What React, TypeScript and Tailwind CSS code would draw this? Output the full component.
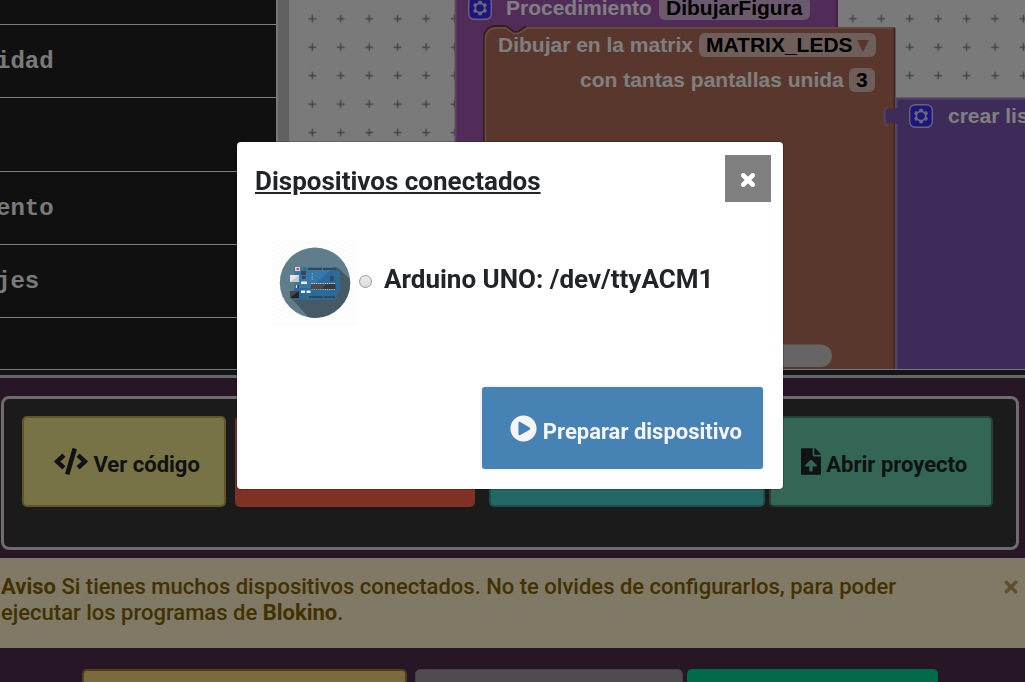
import React from "react";
import { FaCode, FaFileUpload, FaPlayCircle } from "react-icons/fa";

const GEAR =
  "m4.203,7.296 0,1.368 -0.92,0.677 -0.11,0.41 0.9,1.559 0.41,0.11 1.043,-0.457 1.187,0.683 0.127,1.134 0.3,0.3 1.8,0 0.3,-0.299 0.127,-1.138 1.185,-0.682 1.046,0.458 0.409,-0.11 0.9,-1.559 -0.11,-0.41 -0.92,-0.677 0,-1.366 0.92,-0.677 0.11,-0.41 -0.9,-1.559 -0.409,-0.109 -1.046,0.458 -1.185,-0.682 -0.127,-1.138 -0.3,-0.299 -1.8,0 -0.3,0.3 -0.126,1.135 -1.187,0.682 -1.043,-0.457 -0.41,0.11 -0.899,1.559 0.108,0.409z";

function MutatorIcon({ className }: { className: string }) {
  return (
    <svg viewBox="-0.5 -0.5 17 17" className={`absolute size-6 ${className}`} aria-hidden="true">
      <rect width="16" height="16" rx="4" fill="#3a2cff" stroke="#d0c8e8" strokeWidth="1" />
      <path d={GEAR} fill="#d8d4ee" />
      <circle cx="8" cy="8" r="2.7" fill="#3a2cff" />
    </svg>
  );
}

function Category({ label = "", className }: { label?: string; className: string }) {
  return (
    <li className={`flex items-center overflow-hidden border-b border-white pt-0.5 ${className}`}>
      <span className="-ml-1 whitespace-nowrap">{label}</span>
    </li>
  );
}

function BlockCanvas() {
  return (
    <div className="relative min-w-0 flex-1 overflow-hidden bg-[#f4f4f4] font-['Liberation_Sans',sans-serif] text-[21px] leading-6 font-bold whitespace-nowrap text-white">
      <svg className="absolute inset-0 h-full w-full" aria-hidden="true">
        <defs>
          <pattern id="grid" x="9.1" y="4.6" width="28.45" height="28.45" patternUnits="userSpaceOnUse">
            <path d="M10.4 14.2h7.6M14.2 10.4v7.6" stroke="#888" strokeWidth="1.4" />
          </pattern>
        </defs>
        <rect width="100%" height="100%" fill="url(#grid)" />
        <path d="M166 -10H549V27H260V40H220V380H166z" fill="#a458b2" />
        <path d="M166.5 -10V380" stroke="#c08acb" strokeWidth="2" />
        <path d="M548 -10V27" stroke="#84478f" strokeWidth="2" />
        <path d="M196 380V37a10 10 0 0 1 10-10h10l8 6h5l9-6H606V380z" fill="#b46e5a" />
        <path d="M195 380V37a11 11 0 0 1 10-11h12l8 6h4l8-6" fill="none" stroke="#70403c" strokeWidth="2" />
        <path d="M196.500 380V38a10 10 0 0 1 10-10h10l8 5.500h5l9-5.500H605" fill="none" stroke="#d09c89" strokeWidth="1.500" />
        <path d="M605.500 28V380" stroke="#885042" strokeWidth="2" />
        <path d="M607 98H780V380H607V124c-4-6-11 6-11-8s7-2 11-8z" fill="#7a58b2" />
        <path
          d="M780 98.500H607.500V108M607.500 124V380M599 126c-5-2-5-18 0-19"
          fill="none"
          stroke="#9e84c8"
          strokeWidth="2"
        />
        <rect x="110" y="344.500" width="433" height="22.500" rx="11.250" fill="#cacaca" />
      </svg>

      <MutatorIcon className="-top-1 left-[179px]" />
      <span className="absolute -top-1 left-[217px]">Procedimiento</span>
      <span className="absolute -top-1 left-[370px] rounded-md bg-[#d6b4dc] px-[7px] text-black">
        DibujarFigura
      </span>

      <span className="absolute top-[33px] left-[209px]">Dibujar en la matrix</span>
      <span className="absolute top-[33px] left-[410px] flex items-center gap-1 rounded-md bg-[#dcbfb6] px-[7px] text-black">
        MATRIX_LEDS
        <svg viewBox="0 0 12 12" className="mt-px size-3" aria-hidden="true">
          <path d="M0 0H12L6 12z" fill="#b46e5a" />
        </svg>
      </span>
      <span className="absolute top-[68px] left-[291px]">con tantas pantallas unida</span>
      <span className="absolute top-[68px] left-[560px] rounded-md bg-[#dcbfb6] px-[7px] text-black">
        3
      </span>

      <MutatorIcon className="top-[104px] left-[620px]" />
      <span className="absolute top-[104px] left-[659px]">crear lista con</span>
    </div>
  );
}

function ArduinoPicture() {
  return (
    <svg viewBox="0 0 86 86" className="size-[86px] shrink-0" role="img" aria-label="Arduino UNO">
      <defs>
        <pattern id="hatch" width="4" height="4" patternUnits="userSpaceOnUse">
          <path d="M-1 1l2-2M0 4l4-4M3 5l2-2" stroke="#f6f6f6" strokeWidth="0.8" />
        </pattern>
        <clipPath id="disc">
          <circle cx="43" cy="42.700" r="35.200" />
        </clipPath>
      </defs>
      <rect width="86" height="86" fill="#fefefe" />
      <rect width="86" height="86" fill="url(#hatch)" />
      <g clipPath="url(#disc)">
        <rect width="86" height="86" fill="#607d8b" />
        <path d="M65 27l30 28v40H53L18 57z" fill="#455a64" />
      </g>
      <path d="M22 27H64l1 3 3 3V51l-3 3v3l-2 3H22z" fill="#2b6a9e" />
      <path d="M62 27L38 48H22V27z" fill="#3777aa" />
      <path d="M36 28H50v2H36zM51 28H64v2H51zM37 56H51v2H37zM52 56H63v2H52z" fill="#37474f" />
      <rect x="23" y="27" width="5" height="4" fill="#d5d5d5" />
      <rect x="24.500" y="28" width="2.500" height="2" fill="#f44336" />
      <rect x="18" y="35" width="9" height="7" fill="#e6e6e6" />
      <path d="M27 35v7h-9z" fill="#c6cbd0" />
      <path d="M18 51h9v7h-9z" fill="#222" />
      <path d="M18 51h9l-9 7z" fill="#474747" />
      <path d="M29 31h5v4h-5zM30 36h3.500v3H30z" fill="#37474f" />
      <path d="M29 41.500h6v2.500h-6zM29 50.500h4v2.500h-4zM34.500 50.500h4v2.500h-4z" fill="#f1f1f1" />
      <path d="M24 45h3v3h-3z" fill="#304048" />
      <path d="M24 45h1.200v3H24z" fill="#e0e0e0" />
      <path d="M39.500 43.500H63M39.500 49.500H63" stroke="#e0e0e0" strokeWidth="1.200" strokeDasharray="1.200 1" />
      <rect x="39" y="44" width="24.500" height="5.200" fill="#37383a" />
      <path d="M39 44h16l-6 5.200H39z" fill="#4c4a4a" />
      <rect x="58" y="36" width="3.500" height="5" fill="#37474f" />
      <g fill="#3f6d5a">
        <circle cx="32.500" cy="29" r="1.500" />
        <circle cx="65" cy="39" r="1.500" />
        <circle cx="65" cy="52" r="1.500" />
        <circle cx="32.500" cy="57" r="1.500" />
      </g>
      <path d="M39.500 33h1.500v1.500h-1.500zM39.500 36.500h1.500V38h-1.500zM39.500 39h1.500v1h-1.500z" fill="#6fa39c" />
    </svg>
  );
}

function CrossIcon({ className, width }: { className: string; width: number }) {
  return (
    <svg viewBox="0 0 12 12" className={className} aria-hidden="true">
      <path d="M2 2l8 8M10 2l-8 8" stroke="currentColor" strokeWidth={width} strokeLinecap="round" />
    </svg>
  );
}

const toolButton =
  "h-[91px] shrink-0 rounded-[5px] border-2 pt-[30px] pr-6 pb-[27px] pl-[30px] whitespace-nowrap";

export default function App() {
  return (
    <div className="flex h-screen flex-col overflow-hidden bg-[#4d2c4d] font-[Roboto,sans-serif] text-[22px] leading-[26px]">
      <main>
        <section className="flex h-[370px] border-b border-[#f0f0f0]">
          <ul className="flex w-[276px] shrink-0 flex-col bg-[#202020] font-['Liberation_Mono',monospace] text-2xl font-bold text-[#f4f4f4]">
            <Category className="h-[25px]" />
            <Category label="idad" className="h-[73px]" />
            <Category className="h-[74px]" />
            <Category label="ento" className="h-[73px]" />
            <Category label="jes" className="h-[73px]" />
          </ul>
          <div className="w-[13px] shrink-0 border-l-2 border-[#eee] bg-[#c2c2c2]" />
          <BlockCanvas />
        </section>
        <div className="h-2 border-b-3 border-[#ccc] bg-[#282a34]" />

        <section className="mt-[18px] mr-1.5 ml-px flex h-[154px] items-start overflow-hidden rounded-lg border-3 border-[#dadada] bg-[#363636] px-[18px] py-[17px] font-bold text-[#202428]">
          <button className={`${toolButton} border-[#beb04a] bg-[#f0e68c]`}>
            <FaCode className="inline-block h-[27px] w-[34px] align-[-3px]" /> Ver código
          </button>
          <button aria-label="Detener" className="ml-[9px] h-[91px] w-60 shrink-0 rounded-[5px] bg-[#ff624a]" />
          <button
            aria-label="Guardar proyecto"
            className="ml-3.5 h-[91px] w-[276px] shrink-0 rounded-[5px] border-2 border-[#34a0a0] bg-[#48d1cc]"
          />
          <button className={`${toolButton} ml-1 border-[#46866c] bg-[#66cdaa]`}>
            <FaFileUpload className="inline-block h-[27px] w-5 align-[-3px]" /> Abrir proyecto
          </button>
        </section>

        <div
          role="alert"
          className="mt-2 flex h-[90px] items-start justify-between bg-[#fff3cd] pt-4 pr-[7px] pl-px font-medium text-[#856404]"
        >
          <p className="max-w-[920px]">
            <strong className="font-bold">Aviso</strong> Si tienes muchos dispositivos conectados. No te olvides
            de configurarlos, para poder ejecutar los programas de <strong className="font-bold">Blokino</strong>.
          </p>
          <button aria-label="Cerrar aviso" className="mt-1.5 text-[#be9f5c]">
            <CrossIcon className="size-3.5" width={3} />
          </button>
        </div>

        <div className="mt-[21px] flex pl-[82px]">
          <button
            aria-label="Configurar dispositivos"
            className="h-[91px] w-[325px] rounded-[5px] border-2 border-[#a58030] bg-[#f4d47c]"
          />
          <button
            aria-label="Ayuda"
            className="ml-2 h-[91px] w-[268px] rounded-[5px] border border-[#8b7f8b] bg-[#a294a2]"
          />
          <button aria-label="Ejecutar" className="ml-1 h-[91px] w-[251px] rounded-[5px] bg-[#00d494]" />
        </div>
      </main>

      <div className="fixed inset-0 flex items-start justify-center bg-black/50 pt-[142px] pr-[5px]">
        <div
          role="dialog"
          aria-modal="true"
          aria-labelledby="dialog-title"
          className="w-[546px] rounded bg-white pb-[18px] text-[#212529] ring-1 ring-black/20"
        >
          <header className="flex items-start justify-between pt-[13px] pr-3 pl-[18px]">
            <h2 id="dialog-title" className="pt-2.5 text-[26px] leading-8 font-bold underline">
              Dispositivos conectados
            </h2>
            <button
              aria-label="Cerrar"
              className="flex h-[47px] w-[46px] items-center justify-center bg-[#808080] text-white"
            >
              <CrossIcon className="mt-0.5 size-[14px]" width={4} />
            </button>
          </header>
          <div className="mt-[38px] flex items-center pl-[35px]">
            <ArduinoPicture />
            <input
              id="device"
              type="radio"
              name="device"
              className="mb-1 ml-px size-[13px] shrink-0 appearance-none rounded-full border border-[#999] bg-linear-to-b from-[#e9e9e9] to-[#dcdcdc]"
            />
            <label htmlFor="device" className="pb-2 pl-3 text-[26px] leading-8 font-bold whitespace-nowrap">
              Arduino UNO: /dev/ttyACM1
            </label>
          </div>
          <footer className="mt-[59px] flex justify-end pr-[18px]">
            <button className="h-[86px] rounded-[5px] border-2 border-[#f5f5f5] bg-[#4682b4] pt-7 pr-[21px] pb-6 pl-7 font-bold whitespace-nowrap text-[#f5f5f5]">
              <FaPlayCircle className="inline-block size-[27px] align-[-3px]" /> Preparar dispositivo
            </button>
          </footer>
        </div>
      </div>
    </div>
  );
}
